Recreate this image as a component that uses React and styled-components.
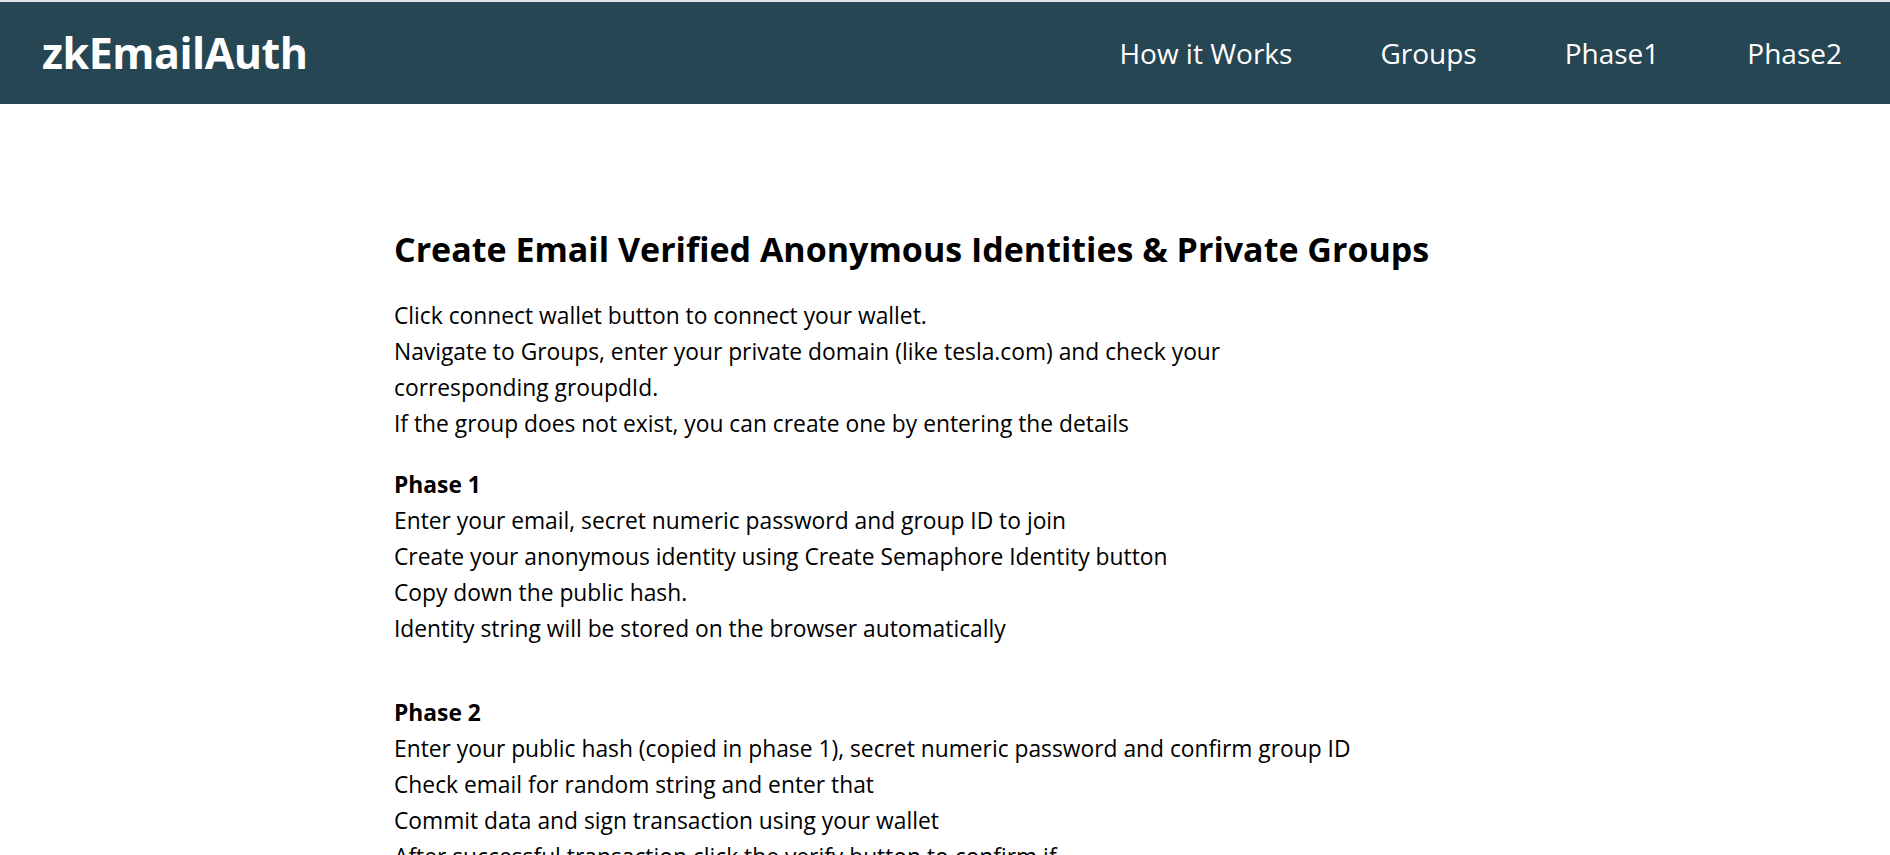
import React from "react";
import styled, { createGlobalStyle } from "styled-components";

const GlobalStyle = createGlobalStyle`
  html, body { margin: 0; padding: 0; background: #ffffff; }
  body { font-family: "Open Sans", "Noto Sans", sans-serif; color: #000; }
  * { box-sizing: border-box; }
`;

const Header = styled.header`
  height: 104px;
  border-top: 2px solid #e4e4e4;
  background: #264653;
  display: flex;
  align-items: center;
  justify-content: space-between;
  padding: 0 48px 0 42px;
`;

const Logo = styled.div`
  color: #ffffff;
  font-weight: 700;
  font-size: 43px;
  letter-spacing: -0.5px;
  padding-bottom: 2px;
`;

const Nav = styled.nav`
  display: flex;
  gap: 88px;
  align-items: center;
`;

const NavLink = styled.a`
  color: #ffffff;
  font-size: 28px;
  text-decoration: none;
  cursor: pointer;
`;

const Main = styled.main`
  width: 1102px;
  margin: 0 auto;
  padding-top: 125px;
`;

const Title = styled.h2`
  margin: 0 0 29px;
  font-size: 34px;
  line-height: 40px;
  font-weight: 700;
`;

const Block = styled.div`
  font-size: 22.8px;
  line-height: 36px;
  margin-top: ${(p) => p.$gap || 0}px;
`;

const PhaseTitle = styled.div`
  font-weight: 700;
  font-size: 22.8px;
  line-height: 36px;
`;

const Line = styled.div`
  white-space: nowrap;
`;

const phases = [
  {
    title: "Phase 1",
    gap: 25,
    lines: [
      "Enter your email, secret numeric password and group ID to join",
      "Create your anonymous identity using Create Semaphore Identity button",
      "Copy down the public hash.",
      "Identity string will be stored on the browser automatically",
    ],
  },
  {
    title: "Phase 2",
    gap: 48,
    lines: [
      "Enter your public hash (copied in phase 1), secret numeric password and confirm group ID",
      "Check email for random string and enter that",
      "Commit data and sign transaction using your wallet",
      "After successful transaction click the verify button to confirm if",
      "your email was verified and identity added to the group",
    ],
  },
];

export default function App() {
  return (
    <>
      <GlobalStyle />
      <Header>
        <Logo>zkEmailAuth</Logo>
        <Nav>
          <NavLink>How it Works</NavLink>
          <NavLink>Groups</NavLink>
          <NavLink>Phase1</NavLink>
          <NavLink>Phase2</NavLink>
        </Nav>
      </Header>
      <Main>
        <Title>Create Email Verified Anonymous Identities &amp; Private Groups</Title>
        <Block>
          <Line>Click connect wallet button to connect your wallet.</Line>
          <Line>Navigate to Groups, enter your private domain (like tesla.com) and check your</Line>
          <Line>corresponding groupdId.</Line>
          <Line>If the group does not exist, you can create one by entering the details</Line>
        </Block>
        {phases.map((ph) => (
          <Block key={ph.title} $gap={ph.gap}>
            <PhaseTitle>{ph.title}</PhaseTitle>
            {ph.lines.map((l) => (
              <Line key={l}>{l}</Line>
            ))}
          </Block>
        ))}
      </Main>
    </>
  );
}
